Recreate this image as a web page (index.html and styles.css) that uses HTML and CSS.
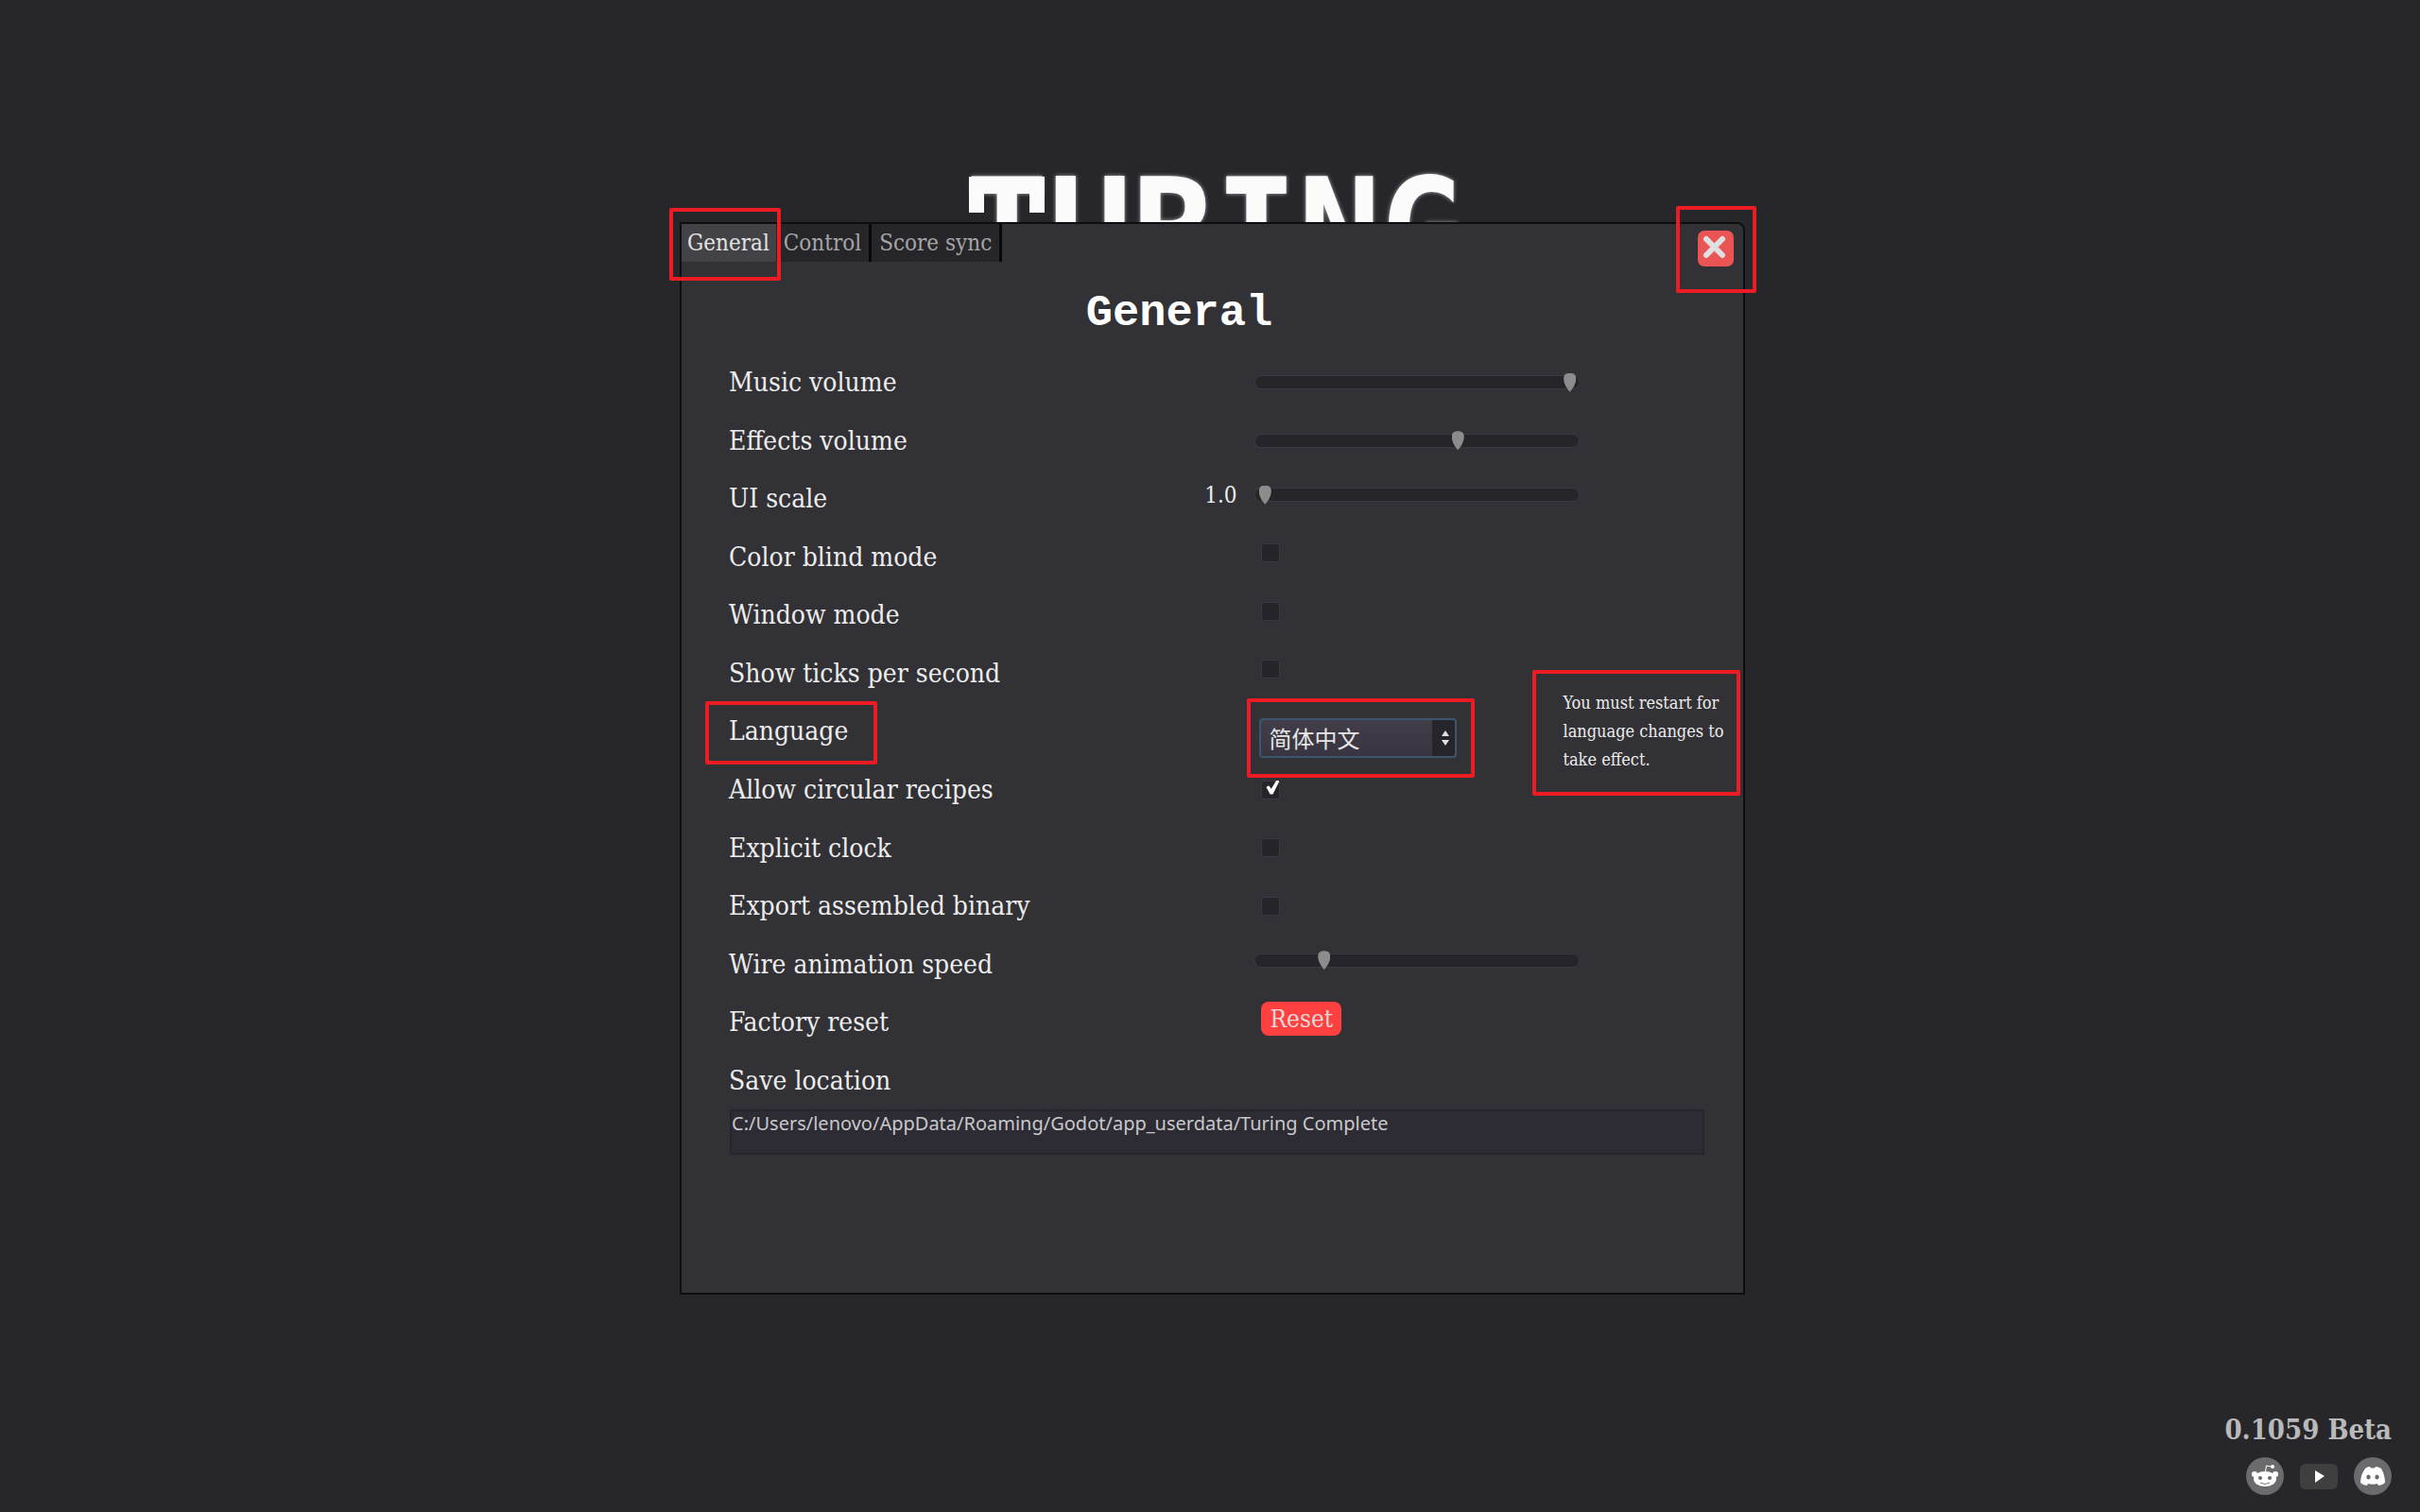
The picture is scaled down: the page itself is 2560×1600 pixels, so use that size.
FILE: index.html
```
<!DOCTYPE html>
<html lang="en">
<head>
    <meta charset="utf-8" />
    <title>Turing Complete</title>
    <link rel="stylesheet" href="styles.css">
</head>
<body>
    <header class="brand"><span class="brand-t">T</span>URING</header>

    <main class="stage">
        <section class="dialog">
            <div class="dialog-top">
                <nav class="tabs">
                    <button type="button" class="tab active">General</button>
                    <button type="button" class="tab">Control</button>
                    <button type="button" class="tab">Score sync</button>
                </nav>
                <button type="button" class="close-button" aria-label="Close">
                    <svg viewBox="0 0 38 38">
                        <path d="M9 9 L26 26 M26 9 L9 26" />
                    </svg>
                </button>
            </div>

            <h1 class="dialog-title">General</h1>

            <form class="settings">
                <div class="rows">
                    <div class="row">
                        <label for="music">Music volume</label>
                        <div class="control"><input type="range" id="music" class="slider" value="99" /></div>
                    </div>
                    <div class="row">
                        <label for="effects">Effects volume</label>
                        <div class="control"><input type="range" id="effects" class="slider" value="63" /></div>
                    </div>
                    <div class="row">
                        <div class="label-value">
                            <label for="scale">UI scale</label>
                            <output for="scale" class="value raised">1.0</output>
                        </div>
                        <div class="control raised"><input type="range" id="scale" class="slider" value="1" /></div>
                    </div>
                    <div class="row">
                        <label for="colorblind">Color blind mode</label>
                        <div class="control raised"><input type="checkbox" id="colorblind" class="check" /></div>
                    </div>
                    <div class="row">
                        <label for="window">Window mode</label>
                        <div class="control raised"><input type="checkbox" id="window" class="check" /></div>
                    </div>
                    <div class="row">
                        <label for="ticks">Show ticks per second</label>
                        <div class="control raised"><input type="checkbox" id="ticks" class="check" /></div>
                    </div>
                    <div class="row">
                        <label for="language">Language</label>
                        <div class="control">
                            <div class="select-box">
                                <select id="language" class="select">
                                    <option>简体中文</option>
                                    <option>English</option>
                                </select>
                                <svg class="select-arrows" viewBox="0 0 10 16">
                                    <path d="M5 0 L9 6 H1 Z M5 16 L9 10 H1 Z" />
                                </svg>
                            </div>
                            <p class="note">You must restart for<br>language changes to<br>take effect.</p>
                        </div>
                    </div>
                    <div class="row">
                        <label for="circular">Allow circular recipes</label>
                        <div class="control"><input type="checkbox" id="circular" class="check" checked /></div>
                    </div>
                    <div class="row">
                        <label for="clock">Explicit clock</label>
                        <div class="control"><input type="checkbox" id="clock" class="check" /></div>
                    </div>
                    <div class="row">
                        <label for="binary">Export assembled binary</label>
                        <div class="control"><input type="checkbox" id="binary" class="check" /></div>
                    </div>
                    <div class="row">
                        <label for="wire">Wire animation speed</label>
                        <div class="control raised"><input type="range" id="wire" class="slider" value="20" /></div>
                    </div>
                    <div class="row">
                        <label for="reset">Factory reset</label>
                        <div class="control raised"><button type="button" id="reset" class="reset-button">Reset</button></div>
                    </div>
                    <div class="row">
                        <label for="save">Save location</label>
                    </div>
                </div>
                <textarea id="save" class="save-path" rows="1" readonly>C:/Users/lenovo/AppData/Roaming/Godot/app_userdata/Turing Complete</textarea>
            </form>

            <!-- highlight frames -->
            <div class="mark mark-tab"></div>
            <div class="mark mark-close"></div>
            <div class="mark mark-label"></div>
            <div class="mark mark-select"></div>
            <div class="mark mark-note"></div>
        </section>
    </main>

    <footer class="footer">
        <p class="version">0.1059 Beta</p>
        <div class="social">
            <a href="#" aria-label="Reddit">
                <svg viewBox="0 0 40 40">
                    <circle cx="20" cy="20" r="20" fill="#6b6b6d" />
                    <path d="M20.5 15 L21.5 9 L27 10" fill="none" stroke="#fff" stroke-width="1" />
                    <circle cx="28" cy="10" r="2" fill="#fff" />
                    <circle cx="9" cy="18" r="3" fill="#fff" />
                    <circle cx="31" cy="18" r="3" fill="#fff" />
                    <ellipse cx="20" cy="23" rx="12" ry="8" fill="#fff" />
                    <circle cx="15" cy="22" r="2" fill="#6b6b6d" />
                    <circle cx="25" cy="22" r="2" fill="#6b6b6d" />
                    <path d="M15 27 Q20 30 25 27" fill="none" stroke="#777" stroke-width="1" />
                </svg>
            </a>
            <a href="#" aria-label="YouTube">
                <svg viewBox="0 0 40 40">
                    <rect x="0" y="7" width="40" height="27" rx="6" fill="#3f3f40" />
                    <path d="M16 14 L26 20 L16 27 Z" fill="#fff" />
                </svg>
            </a>
            <a href="#" aria-label="Discord">
                <svg viewBox="0 0 40 40">
                    <circle cx="20" cy="20" r="20" fill="#6b6b6d" />
                    <path d="M12 12 Q14 10 17 10 L18 11.5 H22 L23 10 Q26 10 29 12 Q33 19 33 27 Q30 30 26 30 L25 28 Q20 29.500 15 28 L14 30 Q10 30 7 27 Q7 19 12 12 Z" fill="#fff" />
                    <ellipse cx="15.500" cy="21" rx="2.200" ry="2.500" fill="#6b6b6d" />
                    <ellipse cx="24.500" cy="21" rx="2.200" ry="2.500" fill="#6b6b6d" />
                </svg>
            </a>
        </div>
    </footer>
</body>
</html>
```
FILE: styles.css
```
* {
    box-sizing: border-box;
}

body {
    margin: 0;
    min-height: 100vh;
    display: flex;
    flex-direction: column;
    background-color: #27262b;
    color: #ececec;
    font-family: "DejaVu Serif Condensed", "DejaVu Serif", serif;
    font-size: 28px;
}

button, select, textarea {
    font-family: inherit;
    border: none;
}

.brand {
    height: 235px;
    padding: 169px 0 0 10px;
    overflow: hidden;
    text-align: center;
    font-family: "DejaVu Sans Mono", monospace;
    font-size: 146px;
    font-weight: bold;
    line-height: 146px;
    color: #fbfbfb;
    text-shadow: 0 0 4px rgba(255, 255, 255, 0.6);
}

/* slab ends hanging from the bar of the T */
.brand-t {
    display: inline-block;
    background: linear-gradient(#fbfbfb, #fbfbfb) 4px 18px / 16px 38px no-repeat,
                linear-gradient(#fbfbfb, #fbfbfb) right 4px top 18px / 16px 38px no-repeat;
}

.stage {
    display: grid;
    grid-template-columns: 719fr 1127fr 714fr;
}

.dialog {
    grid-column: 2;
    position: relative;
    min-height: 1135px;
    border: 2px solid #0e0e10;
    border-top-right-radius: 8px;
    background-color: #323136;
}

.dialog-top {
    display: flex;
    justify-content: space-between;
    align-items: flex-start;
}

.tabs {
    display: flex;
}

.tab {
    height: 40px;
    padding: 0 8px;
    font-size: 24px;
    color: #a5a5a6;
    background-color: #26252a;
    border-right: 3px solid #08080a;
}

    .tab.active {
        padding: 0 7px 0 6px;
        color: #e2e2e2;
        background-color: #434247;
        border-right: none;
    }

.close-button {
    width: 38px;
    height: 38px;
    margin: 7px 10px 0 0;
    padding: 0;
    border-radius: 7px;
    background-color: #eb5454;
}

    .close-button svg {
        display: block;
        fill: none;
        stroke: #e0e0e0;
        stroke-width: 6;
        stroke-linecap: round;
    }

.dialog-title {
    margin: 0;
    padding: 8px 70px 0 0;
    text-align: center;
    font-family: "Liberation Mono", monospace;
    font-size: 47px;
    line-height: 84px;
    color: #fff;
}

.settings {
    padding: 0 15px 0 50px;
}

.rows {
    display: grid;
    grid-auto-rows: 1fr;
    min-height: 800px;
}

.row {
    display: grid;
    grid-template-columns: minmax(0, 558fr) minmax(0, 501fr);
    align-items: center;
}

.label-value {
    display: flex;
    justify-content: space-between;
    align-items: center;
    padding-right: 20px;
}

.value {
    font-size: 24px;
}

.control {
    display: flex;
    align-items: center;
}

.raised {
    padding-bottom: 8px;
}

.slider {
    appearance: none;
    width: 342px;
    height: 13px;
    margin: 0;
    border-radius: 6px;
    background-color: #26252a;
    box-shadow: 0 0 0 1px #3a3942;
}

    .slider::-webkit-slider-thumb {
        appearance: none;
        width: 13px;
        height: 20px;
        background-color: #8c8c8c;
        clip-path: path("M0 6 C0 2 2 0 6.5 0 C11 0 13 2 13 6 C13 11 10 16 6.5 20 C3 16 0 11 0 6 Z");
    }

.check {
    appearance: none;
    position: relative;
    width: 18px;
    height: 18px;
    margin: 0 0 0 7px;
    border-radius: 3px;
    background-color: #252429;
    box-shadow: 0 0 0 1px #3a3940;
}

    .check:checked::before {
        content: "";
        position: absolute;
        left: 4px;
        top: -1px;
        width: 14px;
        height: 15px;
        background-color: #fff;
        clip-path: polygon(0 50%, 20% 38%, 38% 62%, 78% 0, 100% 6%, 50% 100%, 30% 100%);
    }

.select-box {
    position: relative;
    flex: none;
    margin: 14px 0 0 4px;
}

.select {
    appearance: none;
    display: block;
    width: 209px;
    height: 42px;
    margin: 0;
    padding: 0 30px 0 8px;
    border: 2px solid #3c5670;
    border-radius: 4px;
    background: linear-gradient(#26252b, #26252b) right / 24px 100% no-repeat, linear-gradient(#413e49, #383540);
    color: #e6e6e6;
    font-family: "Noto Sans CJK SC", sans-serif;
    font-size: 24px;
}

.select-arrows {
    position: absolute;
    right: 7px;
    top: 13px;
    width: 10px;
    height: 16px;
    fill: #e0e0e0;
    pointer-events: none;
}

.note {
    margin: -15px 0 -15px 112px;
    font-size: 18px;
    line-height: 30px;
    white-space: nowrap;
}

.reset-button {
    height: 36px;
    margin-left: 6px;
    padding: 0 9px;
    border-radius: 8px;
    background-color: #ff4040;
    color: #e6d8d8;
    font-size: 26px;
}

.save-path {
    display: block;
    width: calc(100% - 27px);
    height: 48px;
    margin-left: 1px;
    padding: 0;
    border: 2px solid #26252b;
    background-color: #2d2b34;
    color: #c8c8ca;
    font-family: "Noto Sans", sans-serif;
    font-size: 20px;
    line-height: 26px;
    resize: none;
    outline: none;
}

.mark {
    position: absolute;
    border: 4px solid #ed1c24;
    border-radius: 2px;
    pointer-events: none;
}

.mark-tab {
    left: -13px;
    top: -17px;
    width: 118px;
    height: 77px;
}

.mark-close {
    right: -14px;
    top: -19px;
    width: 85px;
    height: 92px;
}

.mark-label {
    left: 25px;
    top: 505px;
    width: 182px;
    height: 67px;
}

.mark-select {
    left: 598px;
    top: 502px;
    width: 241px;
    height: 84px;
}

.mark-note {
    left: 900px;
    top: 472px;
    width: 220px;
    height: 133px;
}

.footer {
    margin-top: auto;
    padding: 0 30px 18px 0;
    display: flex;
    flex-direction: column;
    align-items: flex-end;
}

.version {
    margin: 0;
    font-size: 29px;
    font-weight: bold;
    line-height: 58px;
    color: #b9b9ba;
}

.social {
    display: flex;
    gap: 17px;
}

    .social svg {
        display: block;
        width: 40px;
        height: 40px;
    }
```
